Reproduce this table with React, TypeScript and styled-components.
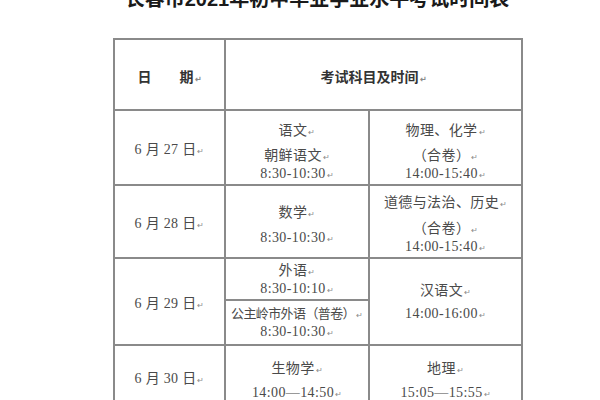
import styled, { createGlobalStyle } from 'styled-components';

const GlobalStyle = createGlobalStyle`
    html, body {
        margin: 0;
        padding: 0;
        background: #ffffff;
        overflow: hidden;
    }
    body {
        font-family: "Liberation Serif", "Noto Sans CJK SC", serif;
    }
`;

type Line = { text: string; gap?: number; tight?: boolean };
type Cell = { lines: Line[]; pad: number; rowSpan?: number };

const App = () =>
    <>
        <GlobalStyle />
        <Sheet>
            <Title>长春市2021年初中毕业学业水平考试时间表</Title>
            <Schedule>
                <colgroup>
                    <col style={{ width: 111 }} />
                    <col style={{ width: 144 }} />
                    <col style={{ width: 153 }} />
                </colgroup>
                <tbody>
                    <Row $h={71}>
                        <HeadCell>日{'\u3000\u3000'}期<Mark>↵</Mark></HeadCell>
                        <HeadCell colSpan={2}>考试科目及时间<Mark>↵</Mark></HeadCell>
                    </Row>

                    <Row $h={75}>
                        <DateCell>6 月 27 日<Mark>↵</Mark></DateCell>
                        <Subjects cell={{ pad: 11, lines: [{ text: '语文', gap: 7 }, { text: '朝鲜语文' }, { text: '8:30-10:30' }] }} />
                        <Subjects cell={{ pad: 11, lines: [{ text: '物理、化学', gap: 7 }, { text: '（合卷）' }, { text: '14:00-15:40' }] }} />
                    </Row>

                    <Row $h={73}>
                        <DateCell>6 月 28 日<Mark>↵</Mark></DateCell>
                        <Subjects cell={{ pad: 18, lines: [{ text: '数学', gap: 7 }, { text: '8:30-10:30' }] }} />
                        <Subjects cell={{ pad: 8, lines: [{ text: '道德与法治、历史', gap: 8 }, { text: '（合卷）' }, { text: '14:00-15:40' }] }} />
                    </Row>

                    <Row $h={42}>
                        <DateCell rowSpan={2}>6 月 29 日<Mark>↵</Mark></DateCell>
                        <Subjects cell={{ pad: 3, lines: [{ text: '外语' }, { text: '8:30-10:10' }] }} />
                        <Subjects cell={{ pad: 23, rowSpan: 2, lines: [{ text: '汉语文', gap: 5 }, { text: '14:00-16:00' }] }} />
                    </Row>
                    <Row $h={45}>
                        <Subjects cell={{ pad: 4, lines: [{ text: '公主岭市外语（普卷）', tight: true }, { text: '8:30-10:30' }] }} />
                    </Row>

                    <Row $h={80}>
                        <DateCell $lift={16}>6 月 30 日<Mark>↵</Mark></DateCell>
                        <Subjects cell={{ pad: 14, lines: [{ text: '生物学', gap: 6 }, { text: '14:00—14:50' }] }} />
                        <Subjects cell={{ pad: 14, lines: [{ text: '地理', gap: 6 }, { text: '15:05—15:55' }] }} />
                    </Row>
                </tbody>
            </Schedule>
        </Sheet>
    </>;

const Subjects = ({ cell }: { cell: Cell }) =>
    <BodyCell $pad={cell.pad} rowSpan={cell.rowSpan}>
        {cell.lines.map((l, i) =>
            <TextLine key={i} $gap={l.gap ?? 0} $tight={!!l.tight}>
                {l.text}<Mark>↵</Mark>
            </TextLine>
        )}
    </BodyCell>;

const Sheet = styled.div`
    width: 408px;
    margin-left: 113px;
`;

const Title = styled.div`
    margin-top: -13px;
    margin-bottom: 27px;
    font-family: "Liberation Sans", "Noto Sans CJK SC", sans-serif;
    font-size: 20px;
    line-height: 24px;
    font-weight: 700;
    color: #1a1a1a;
    text-align: center;
    white-space: nowrap;
`;

const Schedule = styled.table`
    width: 408px;
    border-collapse: collapse;
    table-layout: fixed;
    color: #4a4a4a;
    font-size: 14px;
    line-height: 18px;
`;

const Row = styled.tr<{ $h: number }>`
    height: ${p => p.$h}px;
`;

const HeadCell = styled.td`
    border: 2px solid #8a8a8a;
    text-align: center;
    vertical-align: middle;
    padding: 6px 0 0;
    font-weight: 700;
    color: #333;
    white-space: nowrap;
    overflow: hidden;
`;

const DateCell = styled.td<{ $lift?: number }>`
    border: 2px solid #8a8a8a;
    text-align: center;
    vertical-align: middle;
    padding: 4px 0 ${p => p.$lift ?? 0}px;
    letter-spacing: 0.3px;
    white-space: nowrap;
    overflow: hidden;
`;

const BodyCell = styled.td<{ $pad: number }>`
    border: 2px solid #8a8a8a;
    text-align: center;
    vertical-align: top;
    padding: ${p => p.$pad}px 0 0;
    white-space: nowrap;
    overflow: hidden;
`;

const TextLine = styled.div<{ $gap: number; $tight: boolean }>`
    height: 18px;
    line-height: 18px;
    margin-bottom: ${p => p.$gap}px;
    letter-spacing: ${p => p.$tight ? -0.6 : 0.4}px;
    font-size: ${p => p.$tight ? 13 : 14}px;
`;

const Mark = styled.span`
    font-size: 8px;
    line-height: 1;
    letter-spacing: 0;
    color: #8a8a8a;
    margin-left: 1px;
`;

export default App;
